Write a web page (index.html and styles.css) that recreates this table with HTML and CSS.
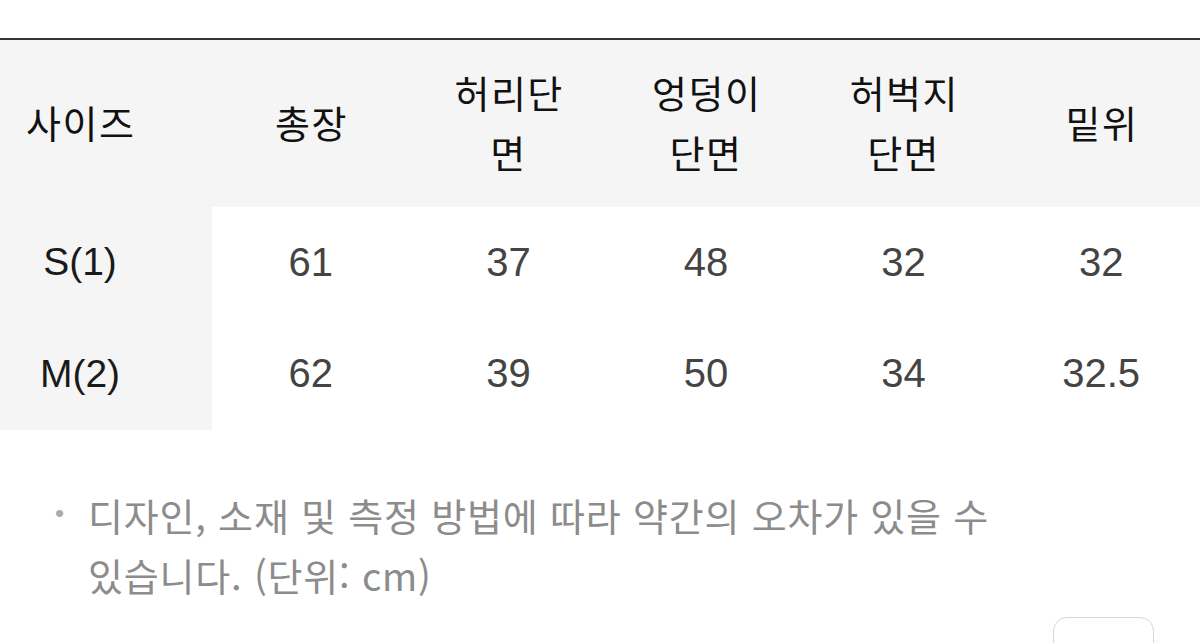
FILE: index.html
```html
<!DOCTYPE html>
<html lang="ko">
<head>
<meta charset="utf-8">
<link rel="stylesheet" href="styles.css">
</head>
<body>
<div class="page">
  <div class="size-table">
    <div class="cell head first">사이즈</div>
    <div class="cell head">총장</div>
    <div class="cell head">허리단<br>면</div>
    <div class="cell head">엉덩이<br>단면</div>
    <div class="cell head">허벅지<br>단면</div>
    <div class="cell head">밑위</div>

    <div class="cell label first">S(1)</div>
    <div class="cell num">61</div>
    <div class="cell num">37</div>
    <div class="cell num">48</div>
    <div class="cell num">32</div>
    <div class="cell num">32</div>

    <div class="cell label first">M(2)</div>
    <div class="cell num">62</div>
    <div class="cell num">39</div>
    <div class="cell num">50</div>
    <div class="cell num">34</div>
    <div class="cell num">32.5</div>
  </div>

  <div class="note">
    <span class="bullet">•</span>
    <p class="note-text">디자인, 소재 및 측정 방법에 따라 약간의 오차가 있을 수<br>있습니다. (단위: cm)</p>
  </div>

  <div class="actions">
    <div class="ghost-btn"></div>
  </div>
</div>
</body>
</html>
```

FILE: styles.css
```css
* { box-sizing: border-box; }
html, body { margin: 0; padding: 0; background: #fff; }
body {
  width: 1200px;
  height: 643px;
  overflow: hidden;
  font-family: "Liberation Sans", "Noto Sans CJK KR", sans-serif;
}
.page { padding-top: 38px; }

.size-table {
  display: grid;
  grid-template-columns: 212px repeat(5, 1fr);
  grid-template-rows: 167px 112px 111px;
  border-top: 2px solid #333;
  background: #fff;
}
.cell {
  display: flex;
  align-items: center;
  justify-content: center;
  text-align: center;
}
.head {
  background: #f5f5f5;
  color: #111;
  font-family: "Noto Sans CJK KR", sans-serif;
  font-size: 38px;
  letter-spacing: 1.5px;
  text-indent: 1.5px;
  line-height: 60px;
  padding-bottom: 4px;
}
.first {
  background: #f5f5f5;
  padding-right: 52px;
}
.label {
  color: #1a1a1a;
  font-size: 39px;
  font-family: "Liberation Sans", sans-serif;
  padding-bottom: 2px;
}
.num {
  color: #444;
  font-size: 40px;
  padding-bottom: 2px;
}

.note {
  display: flex;
  align-items: flex-start;
  padding: 55px 0 0 55px;
  color: #8c8c8c;
}
.bullet {
  font-size: 26px;
  line-height: 56px;
  width: 33px;
  color: #aaa;
  font-family: "Liberation Sans", sans-serif;
}
.note-text {
  margin: 0;
  font-family: "Noto Sans CJK KR", sans-serif;
  font-size: 38px;
  line-height: 60px;
  letter-spacing: 0.8px;
}

.actions {
  display: flex;
  justify-content: flex-end;
  padding: 12px 46px 0 0;
}
.ghost-btn {
  width: 101px;
  height: 60px;
  border: 1px solid #d8d8d8;
  border-radius: 14px;
  background: #fff;
}
```
